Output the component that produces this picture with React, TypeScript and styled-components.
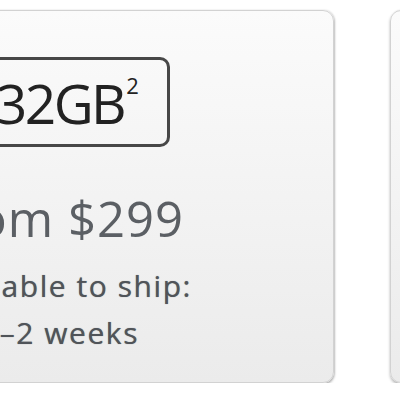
import React from 'react'
import styled, { createGlobalStyle } from 'styled-components'

const GlobalStyle = createGlobalStyle`
  html, body {
    margin: 0;
    padding: 0;
    background: #ffffff;
    overflow: hidden;
  }
  body {
    font-family: 'Open Sans', 'DejaVu Sans', sans-serif;
  }
`

const Row = styled('div')`
  display: flex;
  flex-direction: row;
  gap: 56px;
  padding-top: 10px;
  margin-left: -208px;
  width: 1400px;
`

const Card = styled('div')`
  box-sizing: border-box;
  width: 542px;
  height: 373px;
  flex-shrink: 0;
  display: flex;
  flex-direction: column;
  align-items: center;
  padding-top: 46px;
  border: 1px solid #d2d2d2;
  border-radius: 11px;
  background: linear-gradient(#fbfbfb, #ebebeb);
  box-shadow: 0 2px 3px rgba(0, 0, 0, 0.28), 1px 0 2px rgba(0, 0, 0, 0.14);
`

const Capacity = styled('div')`
  box-sizing: border-box;
  width: 204px;
  height: 90px;
  margin-left: 10px;
  display: flex;
  align-items: center;
  justify-content: center;
  border: 3px solid #474747;
  border-radius: 10px;
  font-size: 55px;
  line-height: 1;
  letter-spacing: -2.5px;
  color: #222222;
`

const Sup = styled('sup')`
  font-size: 22px;
  align-self: flex-start;
  margin-top: 14px;
  margin-left: 2px;
  margin-right: 4px;
  line-height: 1;
  vertical-align: baseline;
`

const Price = styled('div')`
  margin-top: 47px;
  margin-right: 12px;
  font-size: 49px;
  line-height: 1;
  letter-spacing: 1px;
  color: #5b5f64;
`

const Shipping = styled('div')`
  margin-top: 19px;
  margin-right: 6px;
  font-size: 30px;
  line-height: 47px;
  letter-spacing: 1.55px;
  text-align: center;
  color: #505459;
  text-shadow: 0 0 0.8px rgba(60, 64, 70, 0.7);
`

export default function App() {
  return (
    <>
      <GlobalStyle />
      <Row>
        <Card>
          <Capacity>
            32GB<Sup>2</Sup>
          </Capacity>
          <Price>From $299</Price>
          <Shipping>
            Available to ship:
            <br />
            1–2 weeks
          </Shipping>
        </Card>
        <Card />
      </Row>
    </>
  )
}
